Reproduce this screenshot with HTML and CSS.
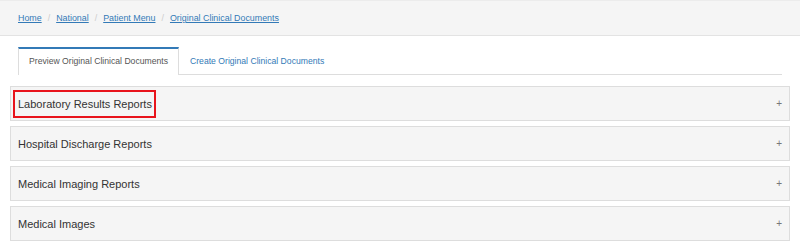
FILE: index.html
```html
<!DOCTYPE html>
<html lang="en">
<head>
    <meta charset="UTF-8">
    <title>Original Clinical Documents</title>
    <link rel="stylesheet" href="styles.css">
</head>
<body>

<div class="crumbs">
    <a href="#">Home</a><span class="sep">/</span>
    <a href="#">National</a><span class="sep">/</span>
    <a href="#">Patient Menu</a><span class="sep">/</span>
    <a href="#">Original Clinical Documents</a>
</div>

<div class="tabs">
    <a href="#" class="tab active">Preview Original Clinical Documents</a>
    <a href="#" class="tab">Create Original Clinical Documents</a>
</div>

<div class="panels">
    <div class="panel">
        <span class="title marked">Laboratory Results Reports</span>
        <span class="toggle">+</span>
    </div>
    <div class="panel">
        <span class="title">Hospital Discharge Reports</span>
        <span class="toggle">+</span>
    </div>
    <div class="panel">
        <span class="title">Medical Imaging Reports</span>
        <span class="toggle">+</span>
    </div>
    <div class="panel">
        <span class="title">Medical Images</span>
        <span class="toggle">+</span>
    </div>
</div>

</body>
</html>
```

FILE: styles.css
```css
body {
    margin: 0;
    font-family: 'Liberation Sans', Arial, sans-serif;
    color: #333;
    background: #fff;
}
.crumbs {
    display: flex;
    align-items: center;
    padding-left: 18px;
    background: #f5f5f5;
    border-top: 1px solid #ececec;
    border-bottom: 1px solid #e3e3e3;
    box-sizing: border-box;
    height: 36px;
    font-size: 8.9px;
}
.crumbs a {
    color: #337ab7;
    text-decoration: underline;
}
.crumbs .sep {
    color: #ccc;
    padding: 0 6px;
}
.tabs {
    display: flex;
    margin: 11px 18px 0;
    border-bottom: 1px solid #ddd;
    height: 27px;
}
.tab {
    display: flex;
    align-items: center;
    padding: 0 10px 3px;
    font-size: 8.65px;
    color: #337ab7;
    text-decoration: none;
    border: 1px solid transparent;
    border-top-width: 2px;
    border-bottom: none;
    margin-bottom: -1px;
}
.tab.active {
    color: #555;
    background: #fff;
    border-color: #ddd;
    border-top-color: #337ab7;
}
.panels {
    margin: 11px 10px 0;
}
.panel {
    height: 35px;
    box-sizing: border-box;
    display: flex;
    align-items: center;
    justify-content: space-between;
    padding: 0 7px 0 7px;
    margin-bottom: 5px;
    background: #f5f5f5;
    border: 1px solid #ddd;
}
.title {
    font-size: 11px;
    color: #333;
}
.title.marked {
    border: 2px solid #e8141c;
    padding: 6px 2px 6px 3px;
    margin-left: -5px;
}
.toggle {
    font-size: 10px;
    color: #777;
}
```
